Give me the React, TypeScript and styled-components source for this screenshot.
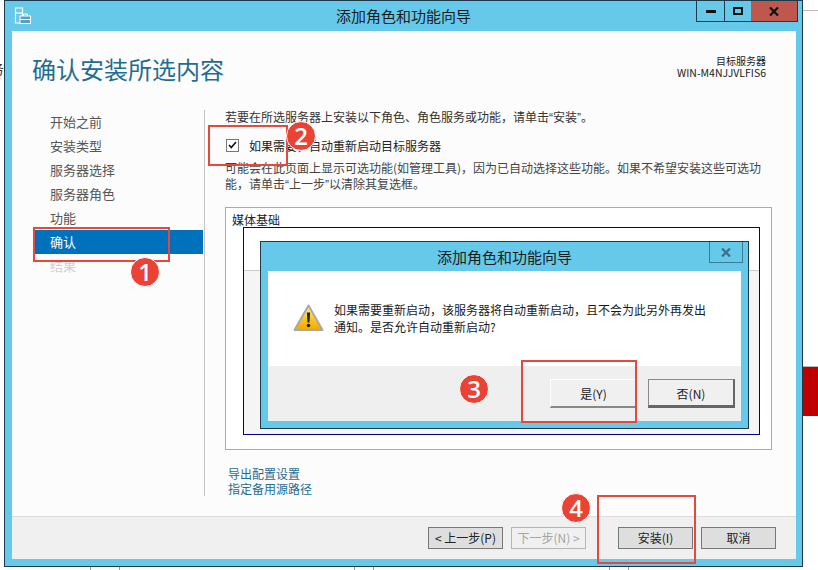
import React from "react";
import styled, { createGlobalStyle } from "styled-components";

const Global = createGlobalStyle`
  html, body { margin: 0; padding: 0; background: #fff; }
  body { font-family: "Noto Sans CJK SC", "Liberation Sans", sans-serif; font-size: 12px; color: #222; }
`;

const Page = styled.div`
  position: relative;
  width: 818px;
  height: 570px;
  overflow: hidden;
  background: #fff;
  display: flex;
  flex-direction: column;
`;
const TopRow = styled.div`
  display: flex;
  height: 567px;
`;
const LeftStrip = styled.div`
  width: 4px;
  overflow: hidden;
  display: flex;
  justify-content: flex-end;
  padding-top: 60px;
  font-size: 14px;
  line-height: 16px;
  color: #333;
  box-sizing: border-box;
  white-space: nowrap;
`;
const RightStrip = styled.div`
  flex: 1;
  display: flex;
  flex-direction: column;
`;
const RightLine = styled.div`
  height: 1px;
  margin-top: 10px;
  background: #bbb;
`;
const RedBlock = styled.div`
  height: 49px;
  margin-top: 355px;
  background: #c00000;
  border-top: 1px solid #bbb;
`;
const BottomStrip = styled.div`
  display: flex;
  height: 3px;
`;
const Tick = styled.div<{ $gap: number; $w: number }>`
  margin-left: ${(p) => p.$gap}px;
  width: ${(p) => p.$w}px;
  border-left: 1px solid #999;
  border-right: 1px solid #999;
`;

const Window = styled.div`
  width: 799px;
  box-sizing: border-box;
  border: 1px solid #1c3a4c;
  background: #66c9ea;
  display: flex;
  flex-direction: column;
  padding: 0 6px 7px 7px;
`;
const TitleBar = styled.div`
  height: 30px;
  margin: 0 -6px 0 -7px;
  display: grid;
  grid-template-columns: 1fr auto 1fr;
  align-items: start;
`;
const AppIcon = styled.svg`
  margin: 6px 0 0 9px;
  display: block;
`;
const TitleText = styled.div`
  font-size: 15px;
  line-height: 30px;
  color: #1a1a1a;
`;
const Controls = styled.div`
  justify-self: end;
  margin-right: 4px;
  display: flex;
  height: 21px;
  border: 1px solid #1c3a4c;
  border-top: 0;
  box-sizing: border-box;
`;
const ControlButton = styled.div<{ $w: number; $close?: boolean }>`
  width: ${(p) => p.$w}px;
  background: ${(p) => (p.$close ? "#c0574e" : "#66c9ea")};
  border-left: ${(p) => (p.$close ? "0" : "1px solid #1c3a4c")};
  display: flex;
  align-items: center;
  justify-content: center;
  box-sizing: border-box;
  &:first-child { border-left: 0; }
`;

const Body = styled.div`
  flex: 1;
  display: flex;
  flex-direction: column;
  background: #fcfcfc;
`;
const Main = styled.div`
  flex: 1;
  display: flex;
  flex-direction: column;
`;
const Header = styled.div`
  height: 79px;
  display: flex;
  justify-content: space-between;
  padding: 0 30px 0 20px;
`;
const PageTitle = styled.h1`
  margin: 20px 0 0;
  font-size: 24px;
  line-height: 36px;
  font-weight: 400;
  color: #1f6d92;
`;
const TargetServer = styled.div`
  margin-top: 24px;
  text-align: right;
  font-size: 10px;
  line-height: 12px;
  color: #222;
`;
const ServerName = styled.span`
  font-size: 10.5px;
  line-height: 0;
`;
const Columns = styled.div`
  display: flex;
  height: 386px;
`;
const Nav = styled.nav`
  width: 192px;
  box-sizing: border-box;
  padding: 0 1px 0 21px;
`;
const NavItem = styled.div<{ $active?: boolean; $off?: boolean }>`
  height: 24px;
  line-height: 24px;
  padding-left: 17px;
  font-size: 13px;
  background: ${(p) => (p.$active ? "#0072bc" : "transparent")};
  color: ${(p) => (p.$active ? "#fff" : p.$off ? "#cfcfcf" : "#555")};
`;
const Content = styled.div`
  flex: 1;
  border-left: 1px solid #c4c4c4;
  padding: 0 24px 0 20px;
`;
const Intro = styled.p`
  margin: 0;
  line-height: 14px;
  color: #333;
`;
const Quote = styled.span`
  font-family: "Liberation Sans", sans-serif;
  line-height: 0;
`;
const CheckRow = styled.label`
  display: flex;
  align-items: center;
  margin: 14px 0 0 1px;
  height: 14px;
  gap: 10px;
  color: #222;
`;
const CheckBox = styled.span`
  width: 13px;
  height: 13px;
  box-sizing: border-box;
  border: 1px solid #777;
  background: #fff;
  display: flex;
  align-items: center;
  justify-content: center;
`;
const Para = styled.p`
  margin: 8px 0 0;
  line-height: 16px;
  color: #444;
`;
const GroupBox = styled.div`
  margin-top: 15px;
  height: 243px;
  box-sizing: border-box;
  border: 1px solid #aaa;
  background: #fff;
`;
const GroupLabel = styled.div`
  margin: 4px 0 0 6px;
  height: 15px;
  line-height: 15px;
  color: #222;
`;
const NavyBox = styled.div`
  margin: 0 11px 0 17px;
  height: 208px;
  box-sizing: border-box;
  border: 1px solid #00008b;
  background: linear-gradient(#fff 0 42px, #ccc 42px 43px, #f5f5f5 43px);
  padding: 13px 10px 0 16px;
`;
const Dialog = styled.div`
  height: 188px;
  box-sizing: border-box;
  border: 1px solid #1c3a4c;
  background: #66c9ea;
  padding: 0 7px 7px 7px;
  display: flex;
  flex-direction: column;
`;
const DialogBar = styled.div`
  height: 29px;
  display: flex;
  position: relative;
  justify-content: center;
`;
const DialogTitle = styled.div`
  font-size: 15px;
  line-height: 30px;
  color: #1a1a1a;
`;
const DialogClose = styled.div`
  position: absolute;
  right: -2px;
  top: 0;
  width: 34px;
  height: 21px;
  box-sizing: border-box;
  border: 1px solid #3b7c97;
  border-top: 0;
  display: flex;
  align-items: center;
  justify-content: center;
`;
const DialogMsg = styled.div`
  height: 95px;
  background: #fff;
  display: flex;
  padding: 24px 30px 0 25px;
  box-sizing: border-box;
  gap: 9px;
`;
const WarnSvg = styled.svg`
  flex-shrink: 0;
  margin-top: 9px;
  margin-right: 1px;
`;
const MsgText = styled.p`
  margin: 6px 0 0;
  line-height: 17px;
  color: #1a1a1a;
`;
const DialogFooter = styled.div`
  flex: 1;
  background: #efefef;
  display: flex;
  justify-content: flex-end;
  gap: 11px;
  padding: 13px 6px 0 0;
`;
const DialogButton = styled.div<{ $dark?: boolean }>`
  width: 87px;
  height: 29px;
  box-sizing: border-box;
  text-align: center;
  line-height: 27px;
  background: #f0f0f0;
  color: #222;
  border-style: solid;
  border-width: ${(p) => (p.$dark ? "1px 2px 3px 1px" : "1px 1px 2px 1px")};
  border-color: ${(p) =>
    p.$dark ? "#888 #666 #666 #888" : "#fff #ddd #888 #fff"};
`;
const Links = styled.div`
  margin: 16px 0 0 3px;
  display: flex;
  flex-direction: column;
  line-height: 15px;
  color: #1f6d92;
`;
const Footer = styled.div`
  height: 43px;
  box-sizing: border-box;
  border-top: 1px solid #dcdcdc;
  background: #f0f0f0;
  display: flex;
  justify-content: flex-end;
  gap: 8px;
  padding: 10px 20px 0 0;
`;
const FootButton = styled.div<{ $off?: boolean; $push?: boolean }>`
  width: 75px;
  height: 22px;
  box-sizing: border-box;
  text-align: center;
  line-height: 20px;
  background: ${(p) => (p.$off ? "#f0f0f0" : "#dedede")};
  border: 1px solid ${(p) => (p.$off ? "#b5b5b5" : "#777")};
  color: ${(p) => (p.$off ? "#a5a5a5" : "#222")};
  margin-left: ${(p) => (p.$push ? "24px" : "0")};
`;

const Mark = styled.div<{ $x: number; $y: number; $w: number; $h: number }>`
  position: absolute;
  left: ${(p) => p.$x}px;
  top: ${(p) => p.$y}px;
  width: ${(p) => p.$w}px;
  height: ${(p) => p.$h}px;
  box-sizing: border-box;
  border: 2px solid #e5493e;
`;
const Badge = styled.div<{ $x: number; $y: number }>`
  position: absolute;
  left: ${(p) => p.$x - 15}px;
  top: ${(p) => p.$y - 15}px;
  width: 30px;
  height: 30px;
  box-sizing: border-box;
  border-radius: 50%;
  border: 1px solid #fff;
  background: #ea4335;
  color: #fff;
  font-family: "Open Sans", "Liberation Sans", sans-serif;
  font-size: 24px;
  font-weight: 600;
  line-height: 28px;
  text-align: center;
`;

const ServerIcon = () => (
  <AppIcon width="17" height="18" viewBox="0 0 17 18" fill="none">
    <path d="M1.5 1h7v15h-7z" stroke="#fff" strokeWidth="1.2" />
    <path d="M1.5 6h7" stroke="#fff" strokeWidth="1.2" />
    <rect x="6" y="9" width="10.5" height="7.5" fill="#5b9ec0" stroke="#fff" />
    <path d="M9.5 9V7h4v2M6 12.5h10.5" stroke="#fff" />
  </AppIcon>
);
const WarnIcon = () => (
  <WarnSvg width="31" height="28" viewBox="0 0 31 28">
    <defs>
      <linearGradient id="warn" x1="0" y1="0" x2="0" y2="1">
        <stop offset="0" stopColor="#fff0a8" />
        <stop offset="0.55" stopColor="#fbc71c" />
        <stop offset="1" stopColor="#f0a800" />
      </linearGradient>
    </defs>
    <path d="M15.5 1.5 29.5 26H1.5z" fill="url(#warn)" stroke="#a8a8a8" strokeWidth="2" strokeLinejoin="round" />
    <path d="M13.9 8.5h3.2l-.6 10h-2z" fill="#222" />
    <circle cx="15.5" cy="21.5" r="1.8" fill="#222" />
  </WarnSvg>
);
const XIcon = ({ color }: { color: string }) => (
  <svg width="10" height="9" viewBox="0 0 10 9">
    <path d="M1 .5 9 8.5M9 .5 1 8.5" stroke={color} strokeWidth="2.2" />
  </svg>
);

const steps = ["开始之前", "安装类型", "服务器选择", "服务器角色", "功能"];

export default function App() {
  return (
    <Page lang="zh-CN">
      <Global />
      <TopRow>
        <LeftStrip>务</LeftStrip>
        <Window>
          <TitleBar>
            <ServerIcon />
            <TitleText>添加角色和功能向导</TitleText>
            <Controls>
              <ControlButton $w={27}>
                <svg width="10" height="3"><rect width="10" height="3" fill="#111" /></svg>
              </ControlButton>
              <ControlButton $w={27}>
                <svg width="10" height="8"><rect x="1" y="1" width="8" height="6" fill="none" stroke="#111" strokeWidth="2" /></svg>
              </ControlButton>
              <ControlButton $w={46} $close>
                <XIcon color="#111" />
              </ControlButton>
            </Controls>
          </TitleBar>
          <Body>
            <Main>
              <Header>
                <PageTitle>确认安装所选内容</PageTitle>
                <TargetServer>
                  目标服务器
                  <br />
                  <ServerName>WIN-M4NJJVLFIS6</ServerName>
                </TargetServer>
              </Header>
              <Columns>
                <Nav>
                  {steps.map((s) => (
                    <NavItem key={s}>{s}</NavItem>
                  ))}
                  <NavItem $active>确认</NavItem>
                  <NavItem $off>结果</NavItem>
                </Nav>
                <Content>
                  <Intro>
                    若要在所选服务器上安装以下角色、角色服务或功能，请单击<Quote>“</Quote>安装<Quote>”</Quote>。
                  </Intro>
                  <CheckRow>
                    <CheckBox>
                      <svg width="9" height="8" viewBox="0 0 9 8">
                        <path d="M1 4 3.3 6.6 8 1" fill="none" stroke="#111" strokeWidth="1.6" />
                      </svg>
                    </CheckBox>
                    如果需要，自动重新启动目标服务器
                  </CheckRow>
                  <Para>
                    可能会在此页面上显示可选功能(如管理工具)，因为已自动选择这些功能。如果不希望安装这些可选功
                    <br />
                    能，请单击<Quote>“</Quote>上一步<Quote>”</Quote>以清除其复选框。
                  </Para>
                  <GroupBox>
                    <GroupLabel>媒体基础</GroupLabel>
                    <NavyBox>
                      <Dialog>
                        <DialogBar>
                          <DialogTitle>添加角色和功能向导</DialogTitle>
                          <DialogClose>
                            <XIcon color="#3e7188" />
                          </DialogClose>
                        </DialogBar>
                        <DialogMsg>
                          <WarnIcon />
                          <MsgText>
                            如果需要重新启动，该服务器将自动重新启动，且不会为此另外再发出
                            <br />
                            通知。是否允许自动重新启动?
                          </MsgText>
                        </DialogMsg>
                        <DialogFooter>
                          <DialogButton>是(Y)</DialogButton>
                          <DialogButton $dark>否(N)</DialogButton>
                        </DialogFooter>
                      </Dialog>
                    </NavyBox>
                  </GroupBox>
                  <Links>
                    <span>导出配置设置</span>
                    <span>指定备用源路径</span>
                  </Links>
                </Content>
              </Columns>
            </Main>
            <Footer>
              <FootButton>&lt; 上一步(P)</FootButton>
              <FootButton $off>下一步(N) &gt;</FootButton>
              <FootButton $push>安装(I)</FootButton>
              <FootButton>取消</FootButton>
            </Footer>
          </Body>
        </Window>
        <RightStrip>
          <RightLine />
          <RedBlock />
        </RightStrip>
      </TopRow>
      <BottomStrip>
        <Tick $gap={90} $w={28} />
        <Tick $gap={234} $w={18} />
        <Tick $gap={235} $w={18} />
      </BottomStrip>

      <Mark $x={33} $y={227} $w={137} $h={35} />
      <Mark $x={208} $y={125} $w={80} $h={41} />
      <Mark $x={521} $y={360} $w={116} $h={63} />
      <Mark $x={597} $y={495} $w={99} $h={69} />
      <Badge $x={145} $y={272}>1</Badge>
      <Badge $x={301} $y={136}>2</Badge>
      <Badge $x={474} $y={389}>3</Badge>
      <Badge $x={576} $y={508}>4</Badge>
    </Page>
  );
}
